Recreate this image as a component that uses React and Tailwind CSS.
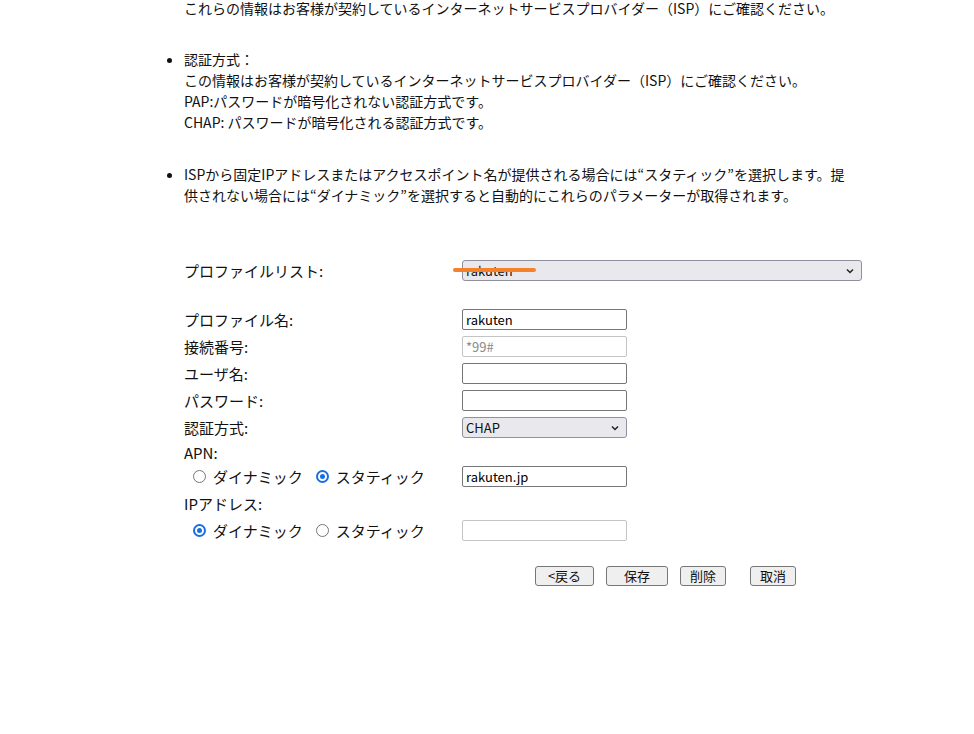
import React from 'react';

const font = { fontFamily: '"Noto Sans CJK JP", "Liberation Sans", sans-serif' };

const Radio = ({ checked, label }) => (
  <span className="flex items-center">
    {checked ? (
      <span className="w-[13px] h-[13px] rounded-full border-[2px] border-[#1a6fe0] flex items-center justify-center">
        <span className="w-[5px] h-[5px] rounded-full bg-[#1a6fe0]" />
      </span>
    ) : (
      <span className="w-[13px] h-[13px] rounded-full border-[1.5px] border-[#767676]" />
    )}
    <span className="ml-[7px]">{label}</span>
  </span>
);

const TextInput = ({ value, placeholder, disabled }) => (
  <div
    className={
      'w-[165px] h-[21px] border rounded-[2px] px-[3px] text-[13px] leading-[19px] ' +
      (disabled ? 'border-[#c4c4c4] text-[#8a8a8a]' : 'border-[#767676] text-black')
    }
  >
    {value || placeholder || ''}
  </div>
);

const Row = ({ label, children }) => (
  <div className="flex items-center h-[27px]">
    <div className="w-[278px]">{label}</div>
    {children}
  </div>
);

const Button = ({ children, w }) => (
  <div
    className={`h-[20px] ${w} border border-[#767676] rounded-[3px] bg-[#efefef] text-[13px] leading-[18px] flex items-center justify-center`}
  >
    {children}
  </div>
);

export default function App() {
  return (
    <div className="w-[974px] h-[734px] bg-white overflow-hidden text-[14px] leading-[21px] text-[#111]" style={font}>
      <div className="ml-[184px] w-[670px] -mt-[2px]">
        <p>これらの情報はお客様が契約しているインターネットサービスプロバイダー（ISP）にご確認ください。</p>
      </div>

      <ul className="ml-[184px] w-[670px] list-disc pl-0 mt-[30px]">
        <li>
          認証方式：
          <br />
          この情報はお客様が契約しているインターネットサービスプロバイダー（ISP）にご確認ください。
          <br />
          PAP:パスワードが暗号化されない認証方式です。
          <br />
          CHAP: パスワードが暗号化される認証方式です。
        </li>
        <li className="mt-[31px]">
          ISPから固定IPアドレスまたはアクセスポイント名が提供される場合には“スタティック”を選択します。提
          <br />
          供されない場合には“ダイナミック”を選択すると自動的にこれらのパラメーターが取得されます。
        </li>
      </ul>

      <div className="ml-[184px] mt-[54px] text-[15px]">
        <div className="flex items-center h-[21px]">
          <div className="w-[278px]">プロファイルリスト:</div>
          <div className="relative w-[400px] h-[21px] border border-[#8f8f9d] rounded-[3px] bg-[#e9e9ed] flex items-center justify-between px-[3px] text-[13px]">
            <span>rakuten</span>
            <svg width="10" height="10" viewBox="0 0 10 10" className="mr-[3px]">
              <path d="M2 3.5 L5 6.5 L8 3.5" fill="none" stroke="#222" strokeWidth="1.5" />
            </svg>
            <span className="absolute left-[-10px] top-[7px] w-[83px] h-[4px] rounded-full bg-[#f5822a]" />
          </div>
        </div>

        <div className="mt-[25px]">
          <Row label="プロファイル名:">
            <TextInput value="rakuten" />
          </Row>
          <Row label="接続番号:">
            <TextInput placeholder="*99#" disabled />
          </Row>
          <Row label="ユーザ名:">
            <TextInput />
          </Row>
          <Row label="パスワード:">
            <TextInput />
          </Row>
          <Row label="認証方式:">
            <div className="w-[165px] h-[21px] border border-[#8f8f9d] rounded-[3px] bg-[#e9e9ed] flex items-center justify-between px-[3px] text-[13px]">
              <span>CHAP</span>
              <svg width="10" height="10" viewBox="0 0 10 10" className="mr-[3px]">
                <path d="M2 3.5 L5 6.5 L8 3.5" fill="none" stroke="#222" strokeWidth="1.5" />
              </svg>
            </div>
          </Row>
          <div className="h-[22px] flex items-center">APN:</div>
          <div className="flex items-center h-[27px]">
            <div className="w-[278px] flex items-center pl-[9px] gap-[13px]">
              <Radio label="ダイナミック" />
              <Radio checked label="スタティック" />
            </div>
            <TextInput value="rakuten.jp" />
          </div>
          <div className="h-[27px] flex items-center">IPアドレス:</div>
          <div className="flex items-center h-[27px]">
            <div className="w-[278px] flex items-center pl-[9px] gap-[13px]">
              <Radio checked label="ダイナミック" />
              <Radio label="スタティック" />
            </div>
            <TextInput disabled />
          </div>
        </div>

        <div className="flex ml-[351px] mt-[22px]">
          <Button w="w-[59px]">&lt;戻る</Button>
          <div className="ml-[12px]"><Button w="w-[62px]">保存</Button></div>
          <div className="ml-[12px]"><Button w="w-[46px]">削除</Button></div>
          <div className="ml-[24px]"><Button w="w-[46px]">取消</Button></div>
        </div>
      </div>
    </div>
  );
}
